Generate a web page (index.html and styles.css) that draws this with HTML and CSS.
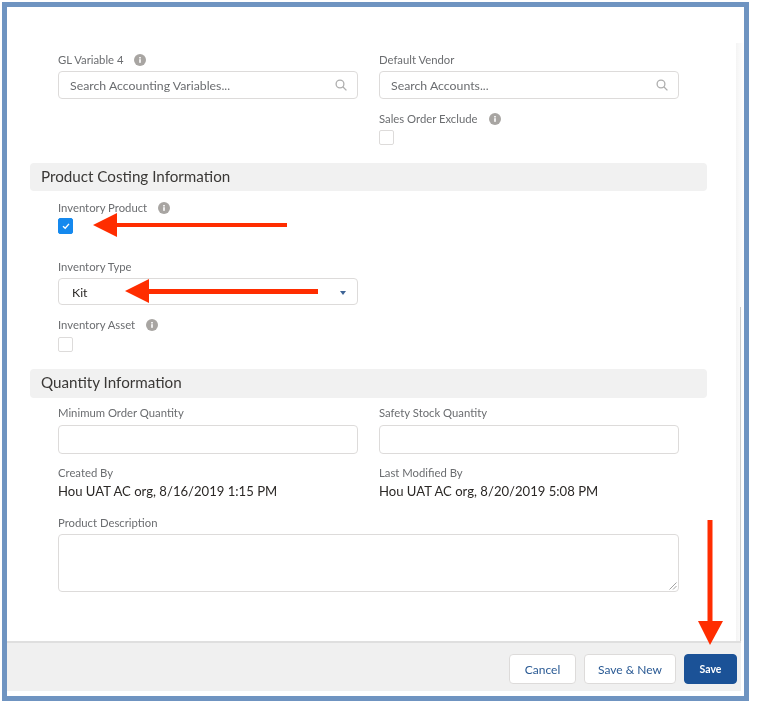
FILE: index.html
```html
<!DOCTYPE html>
<html>
  <head>
    <meta charset="utf-8">
    <link rel="stylesheet" href="styles.css">
  </head>
  <body>
    <div class="frame">
      <div class="form-scroll">
        <div class="scrollbar"><div class="scroll-thumb"></div></div>
        <div class="form">
          <div class="row">
            <div class="field">
              <label class="field-label">GL Variable 4
                <svg class="info" viewBox="0 0 12 12"><circle cx="6" cy="6" r="6"/><rect x="5.2" y="5.2" width="1.6" height="3.6"/><rect x="5.2" y="3" width="1.6" height="1.5"/></svg>
              </label>
              <div class="input">
                <span class="placeholder">Search Accounting Variables...</span>
                <svg class="search" viewBox="0 0 12 12"><circle cx="5" cy="5" r="3.9"/><line x1="7.8" y1="7.8" x2="11.4" y2="11.4"/></svg>
              </div>
            </div>
            <div class="field">
              <label class="field-label">Default Vendor</label>
              <div class="input">
                <span class="placeholder">Search Accounts...</span>
                <svg class="search" viewBox="0 0 12 12"><circle cx="5" cy="5" r="3.9"/><line x1="7.8" y1="7.8" x2="11.4" y2="11.4"/></svg>
              </div>
              <div class="check-field">
                <label class="field-label">Sales Order Exclude
                  <svg class="info" viewBox="0 0 12 12"><circle cx="6" cy="6" r="6"/><rect x="5.2" y="5.2" width="1.6" height="3.6"/><rect x="5.2" y="3" width="1.6" height="1.5"/></svg>
                </label>
                <div class="checkbox"></div>
              </div>
            </div>
          </div>

          <div class="section-title first">Product Costing Information</div>
          <div class="stack">
            <label class="field-label">Inventory Product
              <svg class="info" viewBox="0 0 12 12"><circle cx="6" cy="6" r="6"/><rect x="5.2" y="5.2" width="1.6" height="3.6"/><rect x="5.2" y="3" width="1.6" height="1.5"/></svg>
            </label>
            <div class="checkbox checked">
              <svg viewBox="0 0 10 10"><path d="M2 5.2 L4.2 7.3 L8 2.9"/></svg>
            </div>
            <label class="field-label type-label">Inventory Type</label>
            <div class="input select">
              <span class="value">Kit</span>
              <span class="caret"></span>
            </div>
            <label class="field-label asset-label">Inventory Asset
              <svg class="info" viewBox="0 0 12 12"><circle cx="6" cy="6" r="6"/><rect x="5.2" y="5.2" width="1.6" height="3.6"/><rect x="5.2" y="3" width="1.6" height="1.5"/></svg>
            </label>
            <div class="checkbox asset-box"></div>
          </div>

          <div class="section-title second">Quantity Information</div>
          <div class="row qty-row">
            <div class="field">
              <label class="field-label">Minimum Order Quantity</label>
              <div class="input tall"></div>
            </div>
            <div class="field">
              <label class="field-label">Safety Stock Quantity</label>
              <div class="input tall"></div>
            </div>
          </div>
          <div class="row audit-row">
            <div class="field">
              <label class="field-label">Created By</label>
              <div class="audit-value">Hou UAT AC org, 8/16/2019 1:15 PM</div>
            </div>
            <div class="field">
              <label class="field-label">Last Modified By</label>
              <div class="audit-value">Hou UAT AC org, 8/20/2019 5:08 PM</div>
            </div>
          </div>
          <div class="desc">
            <label class="field-label">Product Description</label>
            <div class="textarea">
              <svg class="grip" viewBox="0 0 8 8"><line x1="0.5" y1="7.5" x2="7.5" y2="0.5"/><line x1="4" y1="7.5" x2="7.5" y2="4"/></svg>
            </div>
          </div>
        </div>
      </div>
      <div class="footer">
        <button class="btn">Cancel</button>
        <button class="btn">Save &amp; New</button>
        <button class="btn btn-primary">Save</button>
      </div>

      <!-- red callout arrows drawn on top of the screenshot -->
      <svg class="arrows" viewBox="0 0 747 699">
        <polygon points="91,223 115,211 115,221 285,221 285,225 115,225 115,235"/>
        <polygon points="123,289 147,277 147,287 316,287 316,292 147,292 147,301"/>
        <polygon points="705.5,518 710.5,518 710.5,619 721,619 708,643 696,619 705.5,619"/>
      </svg>
    </div>
  </body>
</html>
```

FILE: styles.css
```css
body {
  font-family: Lato, "Open Sans", sans-serif;
  margin: 0;
  padding: 2px;
  background-color: #fff;
  color: #6b6d70;
}
.frame {
  position: relative;
  box-sizing: border-box;
  width: 747px;
  height: 699px;
  border: 5px solid #6f94c1;
  display: flex;
  flex-direction: column;
  background-color: #fff;
}
.form-scroll {
  position: relative;
  flex: 1;
  overflow: hidden;
}
.scrollbar {
  position: absolute;
  top: 36px;
  right: 0;
  bottom: 0;
  width: 8px;
  background: linear-gradient(to right, #f4f4f4, #fff);
}
.scroll-thumb {
  position: absolute;
  top: 264px;
  bottom: 0;
  left: 4px;
  width: 1px;
  background-color: #cbcbcb;
}
.form {
  width: 677px;
  padding: 46px 0 0 23px;
  filter: blur(0.3px);
}
.row {
  display: grid;
  grid-template-columns: 300px 300px;
  gap: 21px;
  padding-left: 28px;
}
.field-label {
  display: flex;
  align-items: center;
  height: 14px;
  font-size: 11.3px;
  line-height: 14px;
  color: #6b6d70;
}
.info {
  width: 12px;
  height: 12px;
  margin-left: 11px;
  fill: #a8a5a2;
}
.info rect {
  fill: #fff;
}
.input {
  box-sizing: border-box;
  display: flex;
  align-items: center;
  justify-content: space-between;
  height: 28px;
  margin-top: 4px;
  padding: 0 10px 0 11px;
  border: 1px solid #dddbda;
  border-radius: 4px;
  background-color: #fff;
}
.input.tall {
  height: 29px;
  margin-top: 5px;
}
.placeholder {
  font-size: 12.3px;
  color: #6b6d70;
}
.search {
  width: 12px;
  height: 12px;
  fill: none;
  stroke: #aeaeae;
  stroke-width: 1.3;
}
.check-field {
  margin-top: 13px;
}
.checkbox {
  box-sizing: border-box;
  width: 15px;
  height: 15px;
  margin-top: 4px;
  border: 1px solid #dddbda;
  border-radius: 2px;
  background-color: #fff;
}
.checkbox.checked {
  display: flex;
  align-items: center;
  justify-content: center;
  height: 16px;
  margin-top: 3px;
  border-color: #1589ee;
  background-color: #1589ee;
}
.checkbox.checked svg {
  width: 10px;
  height: 10px;
  fill: none;
  stroke: #fff;
  stroke-width: 1.4;
}
.section-title {
  box-sizing: border-box;
  height: 28px;
  padding-left: 11px;
  border-radius: 4px;
  background-color: #f1f1f1;
  font-size: 15.2px;
  line-height: 26px;
  color: #3a3836;
}
.section-title.first {
  margin-top: 18px;
}
.section-title.second {
  height: 29px;
  margin-top: 17px;
  line-height: 27px;
}
.stack {
  padding: 10px 0 0 28px;
  width: 300px;
}
.type-label {
  margin-top: 26px;
}
.select {
  height: 27px;
  padding: 2px 11px 0 13px;
}
.value {
  font-size: 12.3px;
  color: #2b2826;
}
.caret {
  width: 0;
  height: 0;
  border-left: 3.5px solid transparent;
  border-right: 3.5px solid transparent;
  border-top: 4px solid #3e6496;
}
.asset-label {
  margin-top: 13px;
}
.asset-box {
  margin-top: 5px;
}
.qty-row {
  margin-top: 8px;
}
.audit-row {
  margin-top: 12px;
}
.audit-value {
  margin-top: 2px;
  font-size: 13.1px;
  line-height: 18px;
  color: #2b2826;
}
.desc {
  margin-top: 16px;
  padding-left: 28px;
}
.textarea {
  position: relative;
  box-sizing: border-box;
  width: 621px;
  height: 58px;
  margin-top: 4px;
  border: 1px solid #dddbda;
  border-radius: 4px;
}
.grip {
  position: absolute;
  right: 1px;
  bottom: 1px;
  width: 8px;
  height: 8px;
  stroke: #8a8a8a;
  stroke-width: 0.8;
}
.footer {
  display: flex;
  justify-content: flex-end;
  align-items: center;
  gap: 8px;
  box-sizing: border-box;
  height: 50px;
  margin: 0 3px 5px 0;
  padding: 4px 4px 0 0;
  border-top: 2px solid #dfdfdf;
  background-color: #f0f0f0;
}
.btn {
  box-sizing: border-box;
  height: 30px;
  padding: 0;
  width: 67px;
  border: 1px solid #dddbda;
  border-radius: 4px;
  background-color: #fff;
  font-family: inherit;
  font-size: 12px;
  color: #2a5a94;
  filter: blur(0.3px);
}
.btn:nth-child(2) {
  width: 92px;
}
.btn-primary {
  width: 53px;
  border-color: #1b5297;
  background-color: #1b5297;
  color: #fff;
  font-weight: 700;
  font-size: 10.5px;
}
.arrows {
  position: absolute;
  top: -5px;
  left: -5px;
  width: 747px;
  height: 699px;
  fill: #ff2d00;
  pointer-events: none;
}
```
